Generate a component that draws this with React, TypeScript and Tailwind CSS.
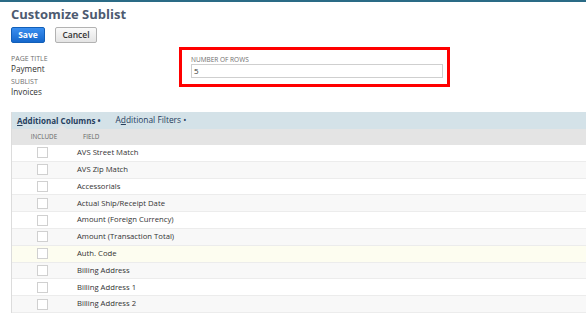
export default function App() {
  const rows = [
    'AVS Street Match',
    'AVS Zip Match',
    'Accessorials',
    'Actual Ship/Receipt Date',
    'Amount (Foreign Currency)',
    'Amount (Transaction Total)',
    'Auth. Code',
    'Billing Address',
    'Billing Address 1',
    'Billing Address 2',
  ]

  return (
    <div className="w-[586px] h-[313px] overflow-hidden bg-white border-t-2 border-[#2a6b86] font-['Open_Sans',sans-serif] text-[#333]">
      <div className="pl-[11px]">
        <h1 className="h-[25px] text-[13px] leading-[25px] font-bold text-[#4d5a70]">Customize Sublist</h1>
        <div className="flex gap-[10px]">
          <button className="w-[34px] h-[16px] rounded-[2px] border border-[#125fb8] bg-gradient-to-b from-[#3a8ff0] to-[#1467cc] text-white text-[8.5px] font-bold leading-none">
            Save
          </button>
          <button className="w-[42px] h-[16px] rounded-[2px] border border-[#b2b2b2] bg-gradient-to-b from-[#fafafa] to-[#e4e4e4] text-[#333] text-[8.5px] font-semibold leading-none">
            Cancel
          </button>
        </div>

        <div className="flex items-start mt-[4px]">
          <div className="w-[168px] pt-[8px]">
            <div className="text-[7px] leading-[8px] text-[#6f6f6f] uppercase">Page Title</div>
            <div className="text-[8.2px] leading-[11px] text-[#333]">Payment</div>
            <div className="text-[7px] leading-[8px] text-[#6f6f6f] uppercase mt-[4px]">Sublist</div>
            <div className="text-[8.2px] leading-[11px] text-[#333]">Invoices</div>
          </div>
          <div className="w-[271px] h-[40px] border-[3px] border-[#ff0000] pl-[9px] pt-[5px]">
            <div className="text-[6.5px] leading-[9px] text-[#6f6f6f] uppercase">Number of Rows</div>
            <div className="w-[252px] h-[14px] border border-[#cfcfcf] text-[8px] leading-[12px] pl-[2px]">5</div>
          </div>
        </div>

        <div className="mt-[15px] border-l border-[#dcdcdc]">
          <div className="relative h-[17px] bg-[#d4e2e8] flex items-center text-[8px] text-[#26405e]">
            <span className="ml-[5px] font-bold">
              <span className="underline">A</span>dditional Columns •
            </span>
            <span className="ml-[15px] text-[8.4px]">
              A<span className="underline">d</span>ditional Filters •
            </span>
            <span className="absolute left-[45px] bottom-0 w-0 h-0 border-l-[5px] border-r-[5px] border-b-[4px] border-l-transparent border-r-transparent border-b-[#e4e4e4]" />
          </div>
          <div className="h-[16px] bg-[#e4e4e4] flex items-center text-[6.3px] text-[#666] uppercase">
            <span className="w-[64px] text-center">Include</span>
            <span className="pl-[7px]">Field</span>
          </div>
          {rows.map((r, i) => (
            <div
              key={r}
              className={
                'h-[16.8px] flex items-center border-b border-[#ececec] ' +
                (r === 'Auth. Code' ? 'bg-[#fdfdf0]' : i % 2 === 1 ? 'bg-[#f8f8f8]' : 'bg-white')
              }
            >
              <div className="w-[60px] flex justify-center">
                <span className="block w-[11px] h-[11px] border border-[#d0d0d0] bg-white" />
              </div>
              <span className="pl-[5px] text-[7.7px] text-[#333]">{r}</span>
            </div>
          ))}
        </div>
      </div>
    </div>
  )
}
